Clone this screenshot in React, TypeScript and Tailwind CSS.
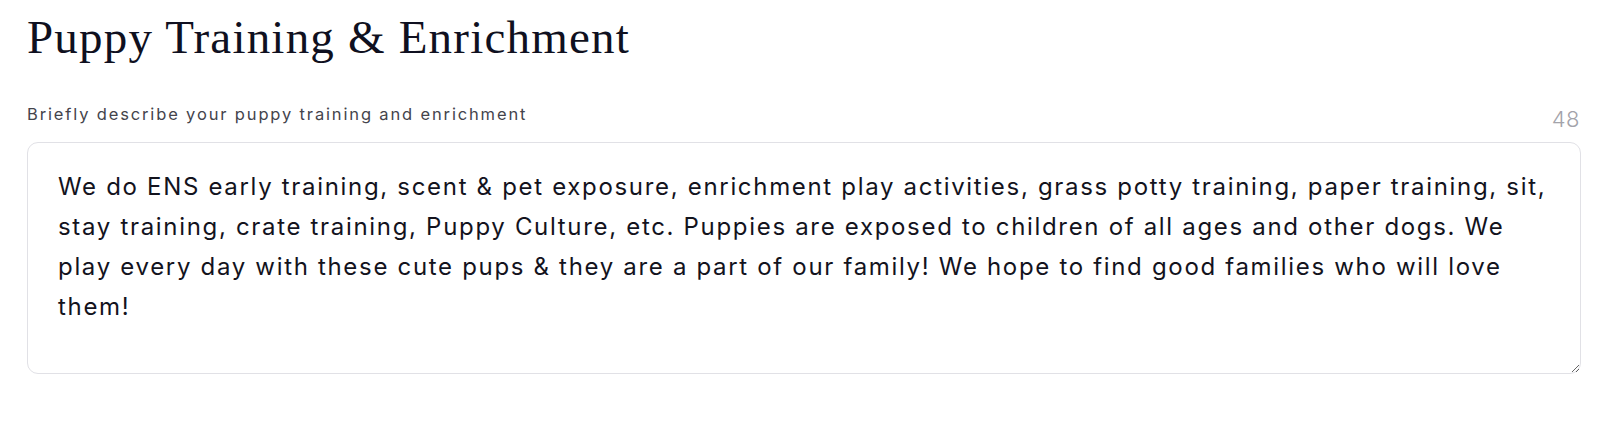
import React from "react";

const BODY =
  "We do ENS early training, scent & pet exposure, enrichment play activities, grass potty training, paper training, sit, stay training, crate training, Puppy Culture, etc. Puppies are exposed to children of all ages and other dogs. We play every day with these cute pups & they are a part of our family! We hope to find good families who will love them!";

export default function App() {
  return (
    <div className="w-[1600px] h-[427px] bg-white">
      <div className="w-[1554px] ml-[27px] pt-[9px]">
        <h1
          className="text-[47px] leading-[56px] tracking-[1.2px] text-[#0f1020] font-normal"
          style={{ fontFamily: '"Liberation Serif", "DejaVu Serif", serif' }}
        >
          Puppy Training &amp; Enrichment
        </h1>
        <div
          className="mt-[39px] flex items-start justify-between"
          style={{ fontFamily: '"Inter", "Noto Sans", sans-serif' }}
        >
          <label htmlFor="desc" className="text-[16.5px] leading-[20px] tracking-[1.85px] text-[#44444c]">
            Briefly describe your puppy training and enrichment
          </label>
          <span className="mt-[4px] text-[22px] leading-[22px] font-light text-[#a3a3aa] tracking-[0.5px] pr-[1px]">
            48
          </span>
        </div>
        <textarea
          id="desc"
          readOnly
          defaultValue={BODY}
          className="mt-[12px] block w-[1554px] h-[232px] rounded-[11px] border border-[#e1e1e6] pl-[30px] pr-[22px] pt-[24px] text-[24px] leading-[40px] tracking-[1.68px] text-[#13131d] outline-none resize-y overflow-hidden"
          style={{ fontFamily: '"Inter", "Noto Sans", sans-serif' }}
        />
      </div>
    </div>
  );
}
